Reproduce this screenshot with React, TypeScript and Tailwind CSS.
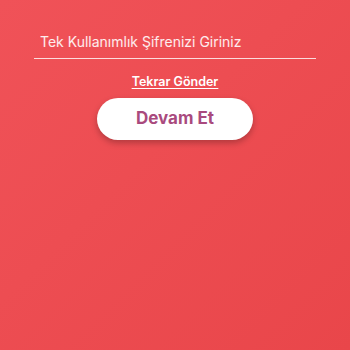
export default function App() {
  return (
    <div
      className="flex h-[350px] w-[350px] flex-col items-center bg-gradient-to-br from-[#f05258] to-[#e9464a]"
      style={{ fontFamily: 'Inter, "Noto Sans", sans-serif' }}
    >
      <div className="mt-[29px] w-[282px] border-b border-white/80 px-[6px] pb-[5px]">
        <input
          type="text"
          placeholder="Tek Kullanımlık Şifrenizi Giriniz"
          className="w-full bg-transparent text-[14px] text-white outline-none placeholder:text-white/90"
        />
      </div>
      <a
        href="#"
        className="mt-[14px] text-[12.5px] font-semibold text-white underline underline-offset-2"
      >
        Tekrar Gönder
      </a>
      <button className="mt-[6px] h-[42px] w-[156px] rounded-full bg-white text-[17px] font-bold text-[#a94a7e] shadow-[0_3px_6px_rgba(0,0,0,0.25)]">
        Devam Et
      </button>
    </div>
  );
}
